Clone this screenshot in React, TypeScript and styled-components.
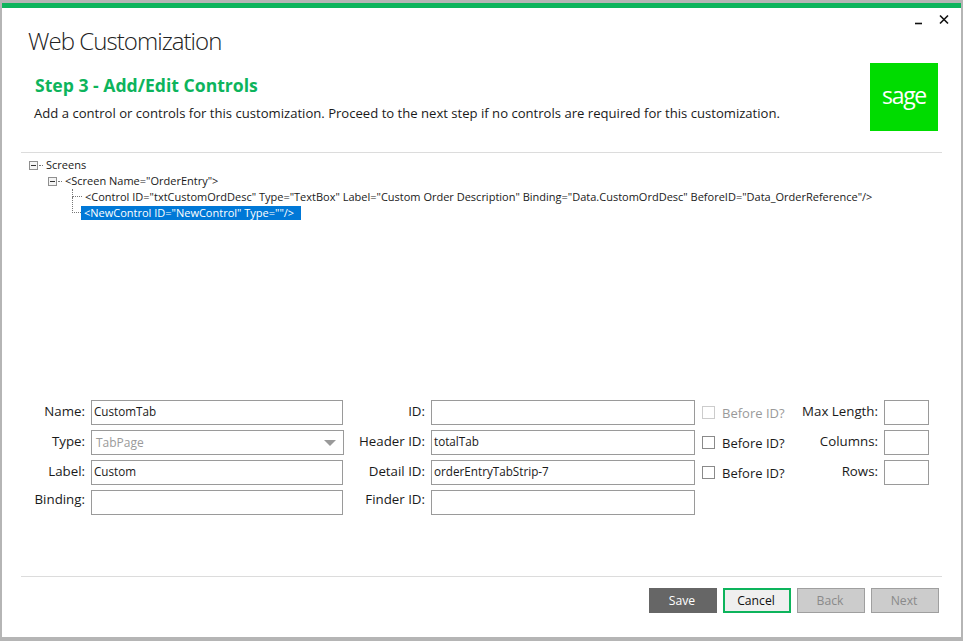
import styled, { createGlobalStyle } from "styled-components";

const GlobalStyle = createGlobalStyle`
  html, body {
    margin: 0;
    height: 100%;
    background: #b5b5b5;
  }
  * {
    box-sizing: border-box;
  }
`;

const Screen = styled.div`
  width: 963px;
  height: 641px;
  padding: 3px 2px 4px 2px;
  overflow: hidden;
  font-family: "Open Sans", "Noto Sans", sans-serif;
  color: #1a1a1a;
`;

const Dialog = styled.div`
  height: 100%;
  display: flex;
  flex-direction: column;
  background: #ffffff;
  border-top: 5px solid #0db45c;
`;

const WindowControls = styled.div`
  height: 0;
  display: flex;
  justify-content: flex-end;
  gap: 13px;
  padding-right: 11px;
`;

const WindowIcon = styled.svg`
  width: 12px;
  height: 12px;
  margin-top: 6px;
  stroke: #111;
  stroke-width: 1.6;
  fill: none;
`;

const Header = styled.header`
  padding: 16px 23px 0 26px;
`;

const Title = styled.h1`
  margin: 0;
  font-size: 24px;
  line-height: 33px;
  font-weight: 300;
  letter-spacing: -0.95px;
  color: #222;
`;

const StepRow = styled.div`
  display: flex;
  justify-content: space-between;
  padding-left: 7px;
`;

const StepText = styled.div`
  padding-top: 15px;
`;

const StepTitle = styled.h2`
  margin: 0;
  font-size: 17.6px;
  line-height: 26px;
  font-weight: 700;
  color: #0db45c;
`;

const StepHint = styled.p`
  margin: 6px 0 0 -1px;
  font-size: 13.1px;
  line-height: 18px;
`;

const Logo = styled.div`
  width: 68px;
  height: 68px;
  margin-top: 6px;
  padding-bottom: 5px;
  display: flex;
  align-items: center;
  justify-content: center;
  background: #00dc00;
  color: #fff;
  font-size: 23px;
  font-weight: 500;
  letter-spacing: -1.3px;
`;

const Divider = styled.hr`
  margin: 21px 19px 0;
  border: 0;
  border-top: 1px solid #dcdcdc;
`;

const Tree = styled.div`
  flex: 1;
  padding: 4px 0 0 27px;
  font-size: 11px;
`;

const TreeRow = styled.div<{ $depth: number }>`
  height: 16px;
  display: flex;
  align-items: center;
  margin-left: ${(props) => props.$depth * 19}px;
  white-space: nowrap;
`;

const Expander = styled.span`
  width: 9px;
  height: 9px;
  position: relative;
  border: 1px solid #8f8f8f;
  background: #f4f4f4;
  flex: none;

  &::after {
    content: "";
    position: absolute;
    left: 1px;
    right: 1px;
    top: 3px;
    height: 1px;
    background: #333;
  }
`;

const Connector = styled.span`
  width: 4px;
  margin-left: 1px;
  flex: none;
  border-top: 1px dotted #777;
`;

const Elbow = styled.span<{ $tall?: boolean }>`
  width: ${(props) => (props.$tall ? 9 : 10)}px;
  height: ${(props) => (props.$tall ? 16 : 8)}px;
  margin-top: ${(props) => (props.$tall ? -16 : -8)}px;
  margin-left: 5px;
  flex: none;
  border-left: 1px dotted #777;
  border-bottom: 1px dotted #777;
`;

const NodeText = styled.span<{ $selected?: boolean }>`
  padding: ${(props) => (props.$selected ? "0 7px 0 3px" : "0 3px")};
  line-height: 14px;
  background: ${(props) => (props.$selected ? "#0078d7" : "transparent")};
  color: ${(props) => (props.$selected ? "#fff" : "#1a1a1a")};
`;

const Form = styled.div`
  display: grid;
  grid-template-columns: 64px 252px 76px 264px 84px 87px 45px;
  grid-auto-rows: 25px;
  row-gap: 5px;
  column-gap: 6px;
  margin-left: 19px;
  margin-bottom: 61px;
  font-size: 13.3px;
`;

const FieldLabel = styled.label<{ $raised?: boolean }>`
  margin-top: ${(props) => (props.$raised ? -2 : 0)}px;
  text-align: right;
  line-height: 23px;
  white-space: nowrap;
`;

const Input = styled.div`
  border: 1px solid #9a9a9a;
  padding-left: 2px;
  font-size: 11.7px;
  line-height: 21px;
  white-space: nowrap;
`;

const SelectBox = styled(Input)`
  display: flex;
  align-items: center;
  justify-content: space-between;
  margin-right: -1px;
  padding: 0 7px 0 4px;
  font-size: 12px;
  color: #9a9a9a;

  &::after {
    content: "";
    border-left: 6px solid transparent;
    border-right: 6px solid transparent;
    border-top: 6px solid #9a9a9a;
  }
`;

const CheckField = styled.label<{ $disabled?: boolean }>`
  display: flex;
  align-items: center;
  gap: 7px;
  padding-left: 1px;
  font-size: 13px;
  color: ${(props) => (props.$disabled ? "#9a9a9a" : "#1a1a1a")};
  white-space: nowrap;
`;

const CheckBox = styled.span<{ $disabled?: boolean }>`
  width: 13px;
  height: 13px;
  flex: none;
  border: 1px solid ${(props) => (props.$disabled ? "#cccccc" : "#8a8a8a")};
`;

const Footer = styled.footer`
  display: flex;
  justify-content: flex-end;
  gap: 6px;
  margin: 0 19px;
  padding: 11px 3px 24px 0;
  border-top: 1px solid #dcdcdc;
`;

const Button = styled.button<{ $variant: "dark" | "focus" | "disabled" }>`
  width: 68px;
  height: 25px;
  padding: 0 2px 0 0;
  font-family: inherit;
  font-size: 12.2px;
  border: ${(props) =>
    props.$variant === "focus"
      ? "2px solid #0db45c"
      : props.$variant === "disabled"
        ? "1px solid #9f9f9f"
        : "1px solid #666"};
  background: ${(props) =>
    props.$variant === "dark" ? "#666666" : props.$variant === "focus" ? "#efefef" : "#cccccc"};
  color: ${(props) =>
    props.$variant === "dark" ? "#fff" : props.$variant === "focus" ? "#111" : "#8a8a8a"};
`;

export default function App() {
  return (
    <Screen>
      <GlobalStyle />
      <Dialog>
        <WindowControls>
          <WindowIcon viewBox="0 0 12 12">
            <path d="M2 9.5h7" />
          </WindowIcon>
          <WindowIcon viewBox="0 0 12 12">
            <path d="M2 1.5l8 8M10 1.5l-8 8" />
          </WindowIcon>
        </WindowControls>
        <Header>
          <Title>Web Customization</Title>
          <StepRow>
            <StepText>
              <StepTitle>Step 3 - Add/Edit Controls</StepTitle>
              <StepHint>
                Add a control or controls for this customization. Proceed to the next step if no controls are
                required for this customization.
              </StepHint>
            </StepText>
            <Logo>sage</Logo>
          </StepRow>
        </Header>
        <Divider />
        <Tree>
          <TreeRow $depth={0}>
            <Expander />
            <Connector />
            <NodeText>Screens</NodeText>
          </TreeRow>
          <TreeRow $depth={1}>
            <Expander />
            <Connector />
            <NodeText>{'<Screen Name="OrderEntry">'}</NodeText>
          </TreeRow>
          <TreeRow $depth={2}>
            <Elbow />
            <NodeText>
              {'<Control ID="txtCustomOrdDesc" Type="TextBox" Label="Custom Order Description" Binding="Data.CustomOrdDesc" BeforeID="Data_OrderReference"/>'}
            </NodeText>
          </TreeRow>
          <TreeRow $depth={2}>
            <Elbow $tall />
            <NodeText $selected>{'<NewControl ID="NewControl" Type=""/>'}</NodeText>
          </TreeRow>
        </Tree>
        <Form>
          <FieldLabel>Name:</FieldLabel>
          <Input>CustomTab</Input>
          <FieldLabel>ID:</FieldLabel>
          <Input />
          <CheckField $disabled>
            <CheckBox $disabled />
            Before ID?
          </CheckField>
          <FieldLabel>Max Length:</FieldLabel>
          <Input />

          <FieldLabel>Type:</FieldLabel>
          <SelectBox>TabPage</SelectBox>
          <FieldLabel>Header ID:</FieldLabel>
          <Input>totalTab</Input>
          <CheckField>
            <CheckBox />
            Before ID?
          </CheckField>
          <FieldLabel>Columns:</FieldLabel>
          <Input />

          <FieldLabel>Label:</FieldLabel>
          <Input>Custom</Input>
          <FieldLabel>Detail ID:</FieldLabel>
          <Input>orderEntryTabStrip-7</Input>
          <CheckField>
            <CheckBox />
            Before ID?
          </CheckField>
          <FieldLabel>Rows:</FieldLabel>
          <Input />

          <FieldLabel $raised>Binding:</FieldLabel>
          <Input />
          <FieldLabel $raised>Finder ID:</FieldLabel>
          <Input />
        </Form>
        <Footer>
          <Button $variant="dark">Save</Button>
          <Button $variant="focus">Cancel</Button>
          <Button $variant="disabled">Back</Button>
          <Button $variant="disabled">Next</Button>
        </Footer>
      </Dialog>
    </Screen>
  );
}
